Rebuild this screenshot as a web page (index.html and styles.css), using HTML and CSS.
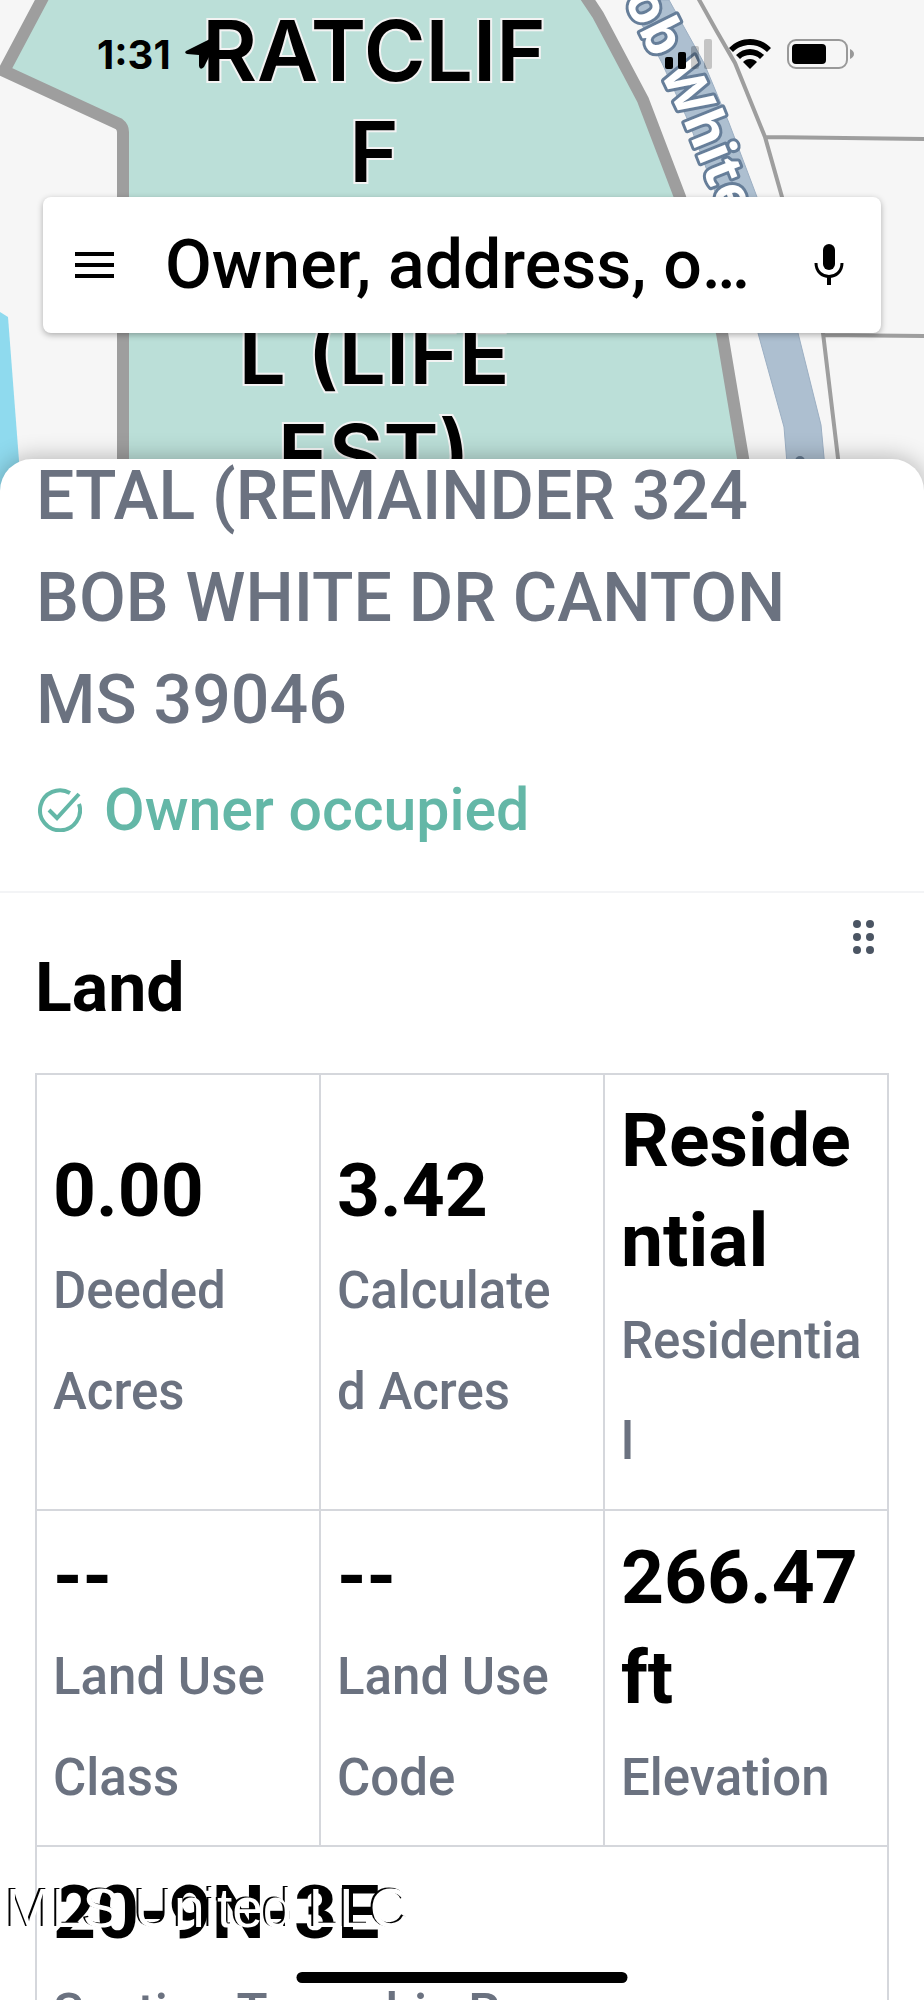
FILE: index.html
```html
<!DOCTYPE html>
<html lang="en">
<head>
    <meta charset="UTF-8">
    <meta name="viewport" content="width=device-width, initial-scale=1.0">
    <title>Parcel details</title>
    <link rel="stylesheet" href="styles.css">
</head>
<body>
    <div class="app">
        <header class="map-area">
            <svg class="map" viewBox="0 0 924 500" preserveAspectRatio="xMidYMin slice" role="img" aria-label="Parcel map">
                <path class="water" d="M-20 305 L0 312 L8 317 L22 500 L-20 500 Z"/>
                <!-- street -->
                <path class="road" d="M629 0 L669 0 L704 63 L729 123 L757 197 L798 333 L821 425 L828 500 L790 500 L784 427 L758 333 L717 197 L690 125 L662 63 Z"/>
                <!-- neighbouring lots -->
                <path class="lot-line" d="M697 -4 L716 30 L735 63 L765 137 L782 197 L823 333 L843 500 M765 137 L930 139 M823 335 L930 336"/>
                <!-- selected parcel -->
                <path class="parcel" d="M47 -10 L4 71 L119 124 Q123 127 123 132 L123 510 L751 510 L743 458 L722 333 L680 197 L643 100 L598 15 L580 -12"/>
                <g class="owner-label">
                    <text x="374" y="81">RATCLIF</text>
                    <text x="374" y="182">F</text>
                    <text x="374" y="384">L (LIFE</text>
                    <text x="374" y="485">EST)</text>
                </g>
                <path id="street" fill="none" d="M608 -34 L639 31 L662 77 L688 132 L716 202 L748 298"/>
                <text class="street-label"><textPath href="#street">Bob White</textPath></text>
                <circle cx="800" cy="461" r="5" fill="#64798f"/>
            </svg>

            <div class="status-bar">
                <div class="clock">
                    <span>1:31</span>
                    <svg width="32" height="34" viewBox="0 0 32 34">
                        <path d="M1 14 L27 1 Q32 0 31 6 L19 30 Q15 34 14 29 L14 18 L2 17 Q-1 16 1 14 Z"/>
                    </svg>
                </div>
                <div class="status-icons">
                    <svg width="48" height="30" viewBox="0 0 48 30">
                        <rect x="0" y="18" width="8" height="12" rx="2"/>
                        <rect x="13" y="13" width="8" height="17" rx="2"/>
                        <rect x="26" y="7" width="8" height="23" rx="2" opacity=".2"/>
                        <rect x="39" y="0" width="8" height="30" rx="2" opacity=".2"/>
                    </svg>
                    <svg width="42" height="30" viewBox="0 0 42 30">
                        <path d="M21 0 C13 0 6 3 0 9 L4 13 C9 8 15 6 21 6 C27 6 33 8 38 13 L42 9 C36 3 29 0 21 0 Z"/>
                        <path d="M21 10 C16 10 11 12 7 16 L11 20 C14 17 17 16 21 16 C25 16 28 17 31 20 L35 16 C31 12 26 10 21 10 Z"/>
                        <path d="M21 20 C18 20 16 21 14 23 L21 30 L28 23 C26 21 24 20 21 20 Z"/>
                    </svg>
                    <svg width="68" height="30" viewBox="0 0 68 30">
                        <rect x="1" y="1" width="59" height="28" rx="8" fill="none" stroke="#999" stroke-width="2"/>
                        <rect x="5" y="5" width="34" height="20" rx="4"/>
                        <path d="M63 10 Q67 12 67 15 Q67 18 63 20 Z" fill="#999"/>
                    </svg>
                </div>
            </div>

            <form class="search">
                <button type="button" class="icon-button" aria-label="Menu">
                    <svg width="40" height="28" viewBox="0 0 40 28">
                        <path d="M0 3 H39 M0 14 H39 M0 25 H39" stroke="#000" stroke-width="4"/>
                    </svg>
                </button>
                <input type="text" placeholder="Owner, address, o…" aria-label="Owner, address">
                <button type="button" class="icon-button" aria-label="Voice search">
                    <svg width="30" height="42" viewBox="0 0 30 42">
                        <rect x="9" y="0" width="12" height="26" rx="6"/>
                        <path d="M2 19 C2 37 28 37 28 19" fill="none" stroke="#000" stroke-width="3"/>
                        <path d="M15 32 V41" stroke="#000" stroke-width="4"/>
                    </svg>
                </button>
            </form>
        </header>

        <main class="sheet">
            <section class="owner">
                <p class="owner-address">ETAL (REMAINDER 324 BOB WHITE DR CANTON MS 39046</p>
                <p class="occupied">
                    <svg width="44" height="44" viewBox="0 0 44 44" fill="none" stroke="currentColor" stroke-width="4">
                        <path d="M32 5 A20 20 0 1 0 41 16"/>
                        <path d="M11 22 L19 30 L41 6"/>
                    </svg>
                    Owner occupied
                </p>
            </section>

            <section class="land">
                <div class="land-header">
                    <h2>Land</h2>
                    <button type="button" class="drag" aria-label="Reorder">
                        <svg width="22" height="36" viewBox="0 0 22 36" fill="#4b5563">
                            <circle cx="4" cy="5" r="4"/><circle cx="17" cy="5" r="4"/>
                            <circle cx="4" cy="18" r="4"/><circle cx="17" cy="18" r="4"/>
                            <circle cx="4" cy="31" r="4"/><circle cx="17" cy="31" r="4"/>
                        </svg>
                    </button>
                </div>
                <table class="facts">
                    <tr>
                        <td><strong>0.00</strong><span>Deeded Acres</span></td>
                        <td><strong>3.42</strong><span>Calculate<wbr>d Acres</span></td>
                        <td><strong>Residential</strong><span>Residential</span></td>
                    </tr>
                    <tr>
                        <td><strong>--</strong><span>Land Use Class</span></td>
                        <td><strong>--</strong><span>Land Use Code</span></td>
                        <td><strong>266.47 ft</strong><span>Elevation</span></td>
                    </tr>
                    <tr>
                        <td colspan="3"><strong>20-9N-3E</strong><span>Section Township Range</span></td>
                    </tr>
                </table>
            </section>
        </main>

        <div class="watermark">MLS United LLC</div>
        <div class="home-indicator"></div>
    </div>
</body>
</html>
```
FILE: styles.css
```css
* {
    box-sizing: border-box;
}

body {
    margin: 0;
    font-family: Roboto, "Liberation Sans", sans-serif;
    background: #fff;
    color: #000;
}

.app {
    position: relative;
    display: flex;
    flex-direction: column;
    height: 100vh;
    overflow: hidden;
}

/* map */
.map-area {
    position: relative;
    flex: none;
    padding-bottom: 126px;
}

.map {
    position: absolute;
    top: 0;
    left: 0;
    width: 100%;
    height: 500px;
    background: #f6f6f6;
}

.water {
    fill: #8fdaee;
}

.road {
    fill: #adbfd0;
    stroke: #9cafc3;
}

.lot-line {
    fill: none;
    stroke: #9e9e9e;
    stroke-width: 4;
}

.parcel {
    fill: #bbdfd8;
    stroke: #9e9e9e;
    stroke-width: 12;
}

.owner-label {
    font-family: Inter, sans-serif;
    font-size: 84px;
    font-weight: 600;
    text-anchor: middle;
    stroke: #f3f3f3;
    stroke-width: 4;
    paint-order: stroke;
}

.street-label {
    font-family: "Open Sans", sans-serif;
    font-size: 54px;
    font-weight: 700;
    fill: #fff;
    stroke: #667e99;
    stroke-width: 6;
    stroke-linejoin: round;
    paint-order: stroke;
}

.status-bar {
    position: relative;
    display: flex;
    justify-content: space-between;
    align-items: center;
    height: 108px;
    padding: 0 69px 0 97px;
}

.clock {
    display: flex;
    align-items: center;
    gap: 14px;
    font-family: Inter, sans-serif;
    font-size: 40px;
    font-weight: 700;
}

.status-icons {
    display: flex;
    align-items: center;
    gap: 16px;
}

/* search */
.search {
    position: relative;
    display: flex;
    align-items: center;
    height: 136px;
    margin: 89px 43px 0;
    padding: 0 37px 0 32px;
    background: #fff;
    border-radius: 8px;
    box-shadow: 0 2px 6px rgba(0, 0, 0, 0.3);
}

.search input {
    flex: 1;
    min-width: 0;
    margin: 0 36px 0 50px;
    padding: 0;
    border: 0;
    outline: 0;
    background: none;
    font-family: inherit;
    font-size: 68px;
    font-weight: 500;
}

.search input::placeholder {
    color: #000;
    opacity: 1;
}

.icon-button,
.drag {
    display: flex;
    padding: 0;
    border: 0;
    background: none;
}

/* bottom sheet */
.sheet {
    position: relative;
    flex: 1;
    min-height: 0;
    overflow: hidden;
    background: #fff;
    border-radius: 32px 32px 0 0;
    box-shadow: 0 0 24px rgba(0, 0, 0, 0.3);
}

.owner {
    margin-top: -14px;
    padding: 0 36px 30px;
    border-bottom: 2px solid #f3f4f6;
}

.owner-address {
    margin: 0;
    font-size: 68px;
    line-height: 102px;
    font-weight: 500;
    color: #6b7280;
}

.occupied {
    display: flex;
    align-items: center;
    gap: 22px;
    margin: 8px 0 0;
    font-size: 59px;
    line-height: 102px;
    font-weight: 500;
    color: #64b7a7;
}

.occupied svg {
    margin-left: 2px;
}

.land {
    padding: 26px 35px 0;
}

.land-header {
    display: flex;
    justify-content: space-between;
    align-items: flex-start;
    padding-right: 14px;
}

.land h2 {
    margin: 18px 0 34px;
    font-size: 68px;
    line-height: 102px;
    font-weight: 700;
}

/* parcel facts */
.facts {
    width: 100%;
    table-layout: fixed;
    border-collapse: collapse;
}

.facts td {
    padding: 15px 24px 17px 16px;
    border: 2px solid #d5d7dc;
    vertical-align: middle;
    overflow-wrap: break-word;
}

.facts strong,
.facts span {
    display: block;
}

.facts strong {
    font-size: 75px;
    line-height: 100px;
    font-weight: 700;
}

.facts span {
    font-size: 51px;
    line-height: 101px;
    font-weight: 500;
    color: #6b7280;
}

/* overlays */
.watermark {
    position: absolute;
    left: 6px;
    bottom: 60px;
    font-family: "Liberation Sans", sans-serif;
    font-size: 55px;
    line-height: 64px;
    color: #fff;
    text-shadow: -2px -1px 0 #000;
}

.home-indicator {
    position: absolute;
    left: 50%;
    bottom: 17px;
    width: 331px;
    height: 11px;
    border-radius: 6px;
    background: #000;
    transform: translateX(-50%);
}
```
